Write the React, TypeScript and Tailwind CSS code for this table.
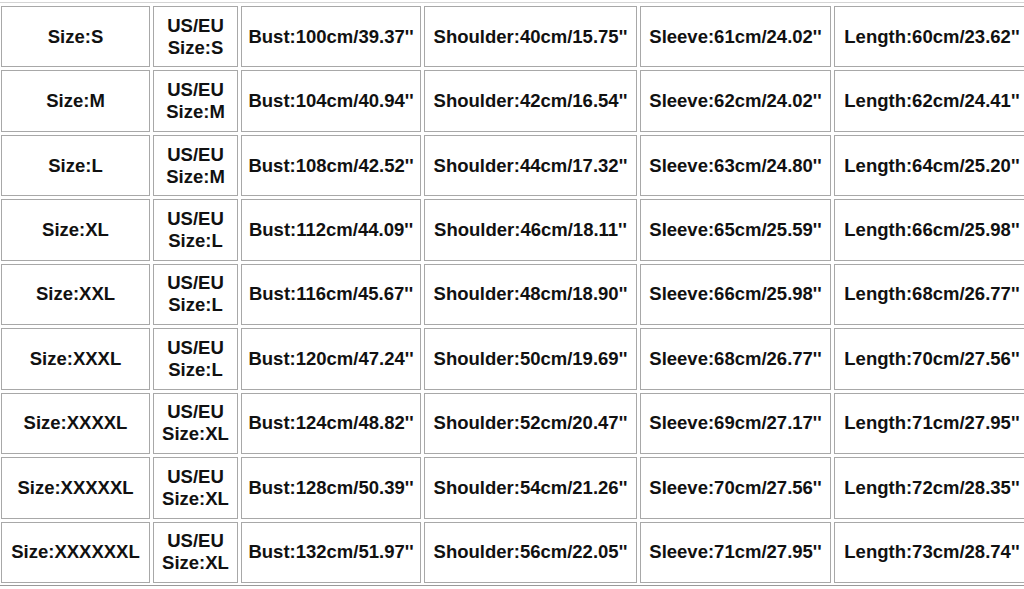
const rows: [string, string, string, string, string, string][] = [
  ["Size:S", "Size:S", "Bust:100cm/39.37''", "Shoulder:40cm/15.75''", "Sleeve:61cm/24.02''", "Length:60cm/23.62''"],
  ["Size:M", "Size:M", "Bust:104cm/40.94''", "Shoulder:42cm/16.54''", "Sleeve:62cm/24.02''", "Length:62cm/24.41''"],
  ["Size:L", "Size:M", "Bust:108cm/42.52''", "Shoulder:44cm/17.32''", "Sleeve:63cm/24.80''", "Length:64cm/25.20''"],
  ["Size:XL", "Size:L", "Bust:112cm/44.09''", "Shoulder:46cm/18.11''", "Sleeve:65cm/25.59''", "Length:66cm/25.98''"],
  ["Size:XXL", "Size:L", "Bust:116cm/45.67''", "Shoulder:48cm/18.90''", "Sleeve:66cm/25.98''", "Length:68cm/26.77''"],
  ["Size:XXXL", "Size:L", "Bust:120cm/47.24''", "Shoulder:50cm/19.69''", "Sleeve:68cm/26.77''", "Length:70cm/27.56''"],
  ["Size:XXXXL", "Size:XL", "Bust:124cm/48.82''", "Shoulder:52cm/20.47''", "Sleeve:69cm/27.17''", "Length:71cm/27.95''"],
  ["Size:XXXXXL", "Size:XL", "Bust:128cm/50.39''", "Shoulder:54cm/21.26''", "Sleeve:70cm/27.56''", "Length:72cm/28.35''"],
  ["Size:XXXXXXL", "Size:XL", "Bust:132cm/51.97''", "Shoulder:56cm/22.05''", "Sleeve:71cm/27.95''", "Length:73cm/28.74''"],
];

function Cell({ children }: { children: React.ReactNode }) {
  return (
    <div className="flex items-center justify-center overflow-hidden whitespace-nowrap border border-[#a8a8a8] bg-white text-center leading-[22px]">
      {children}
    </div>
  );
}

export default function App() {
  return (
    <div className="h-[589px] w-[1024px] overflow-hidden bg-white font-['Liberation_Sans',Arial,sans-serif] text-[18.5px] font-bold text-[#111]">
      <div className="mt-[2px] w-[1040px] border-y border-t-[#d4d4d4] border-b-[#9a9a9a] pb-[2px] pl-[1px] pt-[3px]">
        <div className="grid h-[577px] grid-cols-[149px_85px_180px_213px_191px_196px] grid-rows-[repeat(9,1fr)] gap-[3px]">
          {rows.map((r, i) => (
            <div key={i} className="contents">
              <Cell>{r[0]}</Cell>
              <Cell>
                <span>
                  US/EU
                  <br />
                  {r[1]}
                </span>
              </Cell>
              <Cell>{r[2]}</Cell>
              <Cell>{r[3]}</Cell>
              <Cell>{r[4]}</Cell>
              <Cell>{r[5]}</Cell>
            </div>
          ))}
        </div>
      </div>
    </div>
  );
}
